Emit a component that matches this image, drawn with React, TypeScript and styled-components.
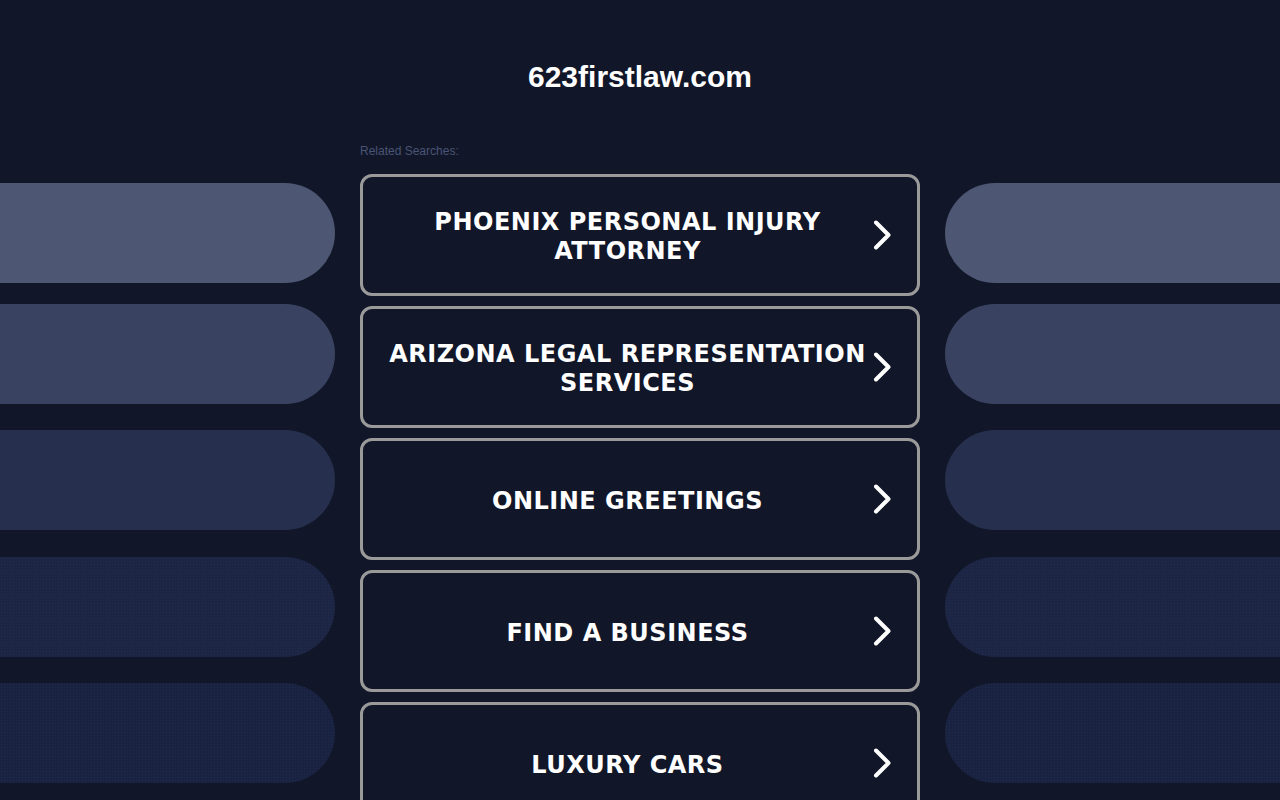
import React from "react";
import styled, { createGlobalStyle, css } from "styled-components";

const Global = createGlobalStyle`
  html, body { margin: 0; padding: 0; background: #111729; overflow: hidden; }
  body { font-family: "Liberation Sans", Arial, sans-serif; }
`;

const Page = styled.div`
  display: grid;
  grid-template-columns: 1fr 560px 1fr;
  column-gap: 25px;
  width: 1280px;
  height: 800px;
  overflow: hidden;
`;

const Side = styled.div`
  display: flex;
  flex-direction: column;
`;

const dotted = css`
  background-image: radial-gradient(rgba(60, 75, 115, 0.22) 0.6px, transparent 0.9px);
  background-size: 3px 3px;
`;

const Pill = styled.div<{ $side: "left" | "right"; $top: number; $color: string; $dots?: boolean }>`
  height: 100px;
  margin-top: ${(p) => p.$top}px;
  background-color: ${(p) => p.$color};
  ${(p) => (p.$dots ? dotted : "")}
  border-radius: ${(p) => (p.$side === "left" ? "0 50px 50px 0" : "50px 0 0 50px")};
`;

const Center = styled.main`
  display: flex;
  flex-direction: column;
`;

const Title = styled.h1`
  margin: 0;
  padding-top: 59px;
  font-family: "Liberation Sans", Arial, sans-serif;
  font-size: 30px;
  line-height: 36px;
  font-weight: 700;
  color: #ffffff;
  text-align: center;
`;

const Related = styled.div`
  margin-top: 49px;
  font-family: "Liberation Sans", Arial, sans-serif;
  font-size: 12px;
  line-height: 14px;
  color: #4a5475;
`;

const List = styled.div`
  margin-top: 16px;
  display: flex;
  flex-direction: column;
  gap: 10px;
`;

const Item = styled.a`
  box-sizing: border-box;
  height: 122px;
  flex-shrink: 0;
  display: flex;
  align-items: center;
  padding: 0 27px 0 17px;
  border: 3px solid #9a9a9a;
  border-radius: 12px;
  background: #111729;
  text-decoration: none;
  cursor: pointer;
`;

const Label = styled.span`
  flex: 1;
  padding-top: 4px;
  text-align: center;
  font-family: "DejaVu Sans", Verdana, sans-serif;
  font-weight: 700;
  font-size: 24px;
  line-height: 29px;
  letter-spacing: 0.5px;
  color: #ffffff;
  text-transform: uppercase;
`;

const ChevronBox = styled.svg`
  flex-shrink: 0;
  width: 19px;
  height: 30px;
  margin-left: -2px;
  margin-right: -2px;
`;

const Chevron = () => (
  <ChevronBox viewBox="0 0 19 30" fill="none">
    <path d="M3 2.5 L15.5 15 L3 27.5" stroke="#ffffff" strokeWidth="4" strokeLinecap="round" strokeLinejoin="round" />
  </ChevronBox>
);

const pills = [
  { top: 183, color: "#4d5672" },
  { top: 21, color: "#3a4261" },
  { top: 26, color: "#262f4d" },
  { top: 27, color: "#1d2545", dots: true },
  { top: 26, color: "#1a2241", dots: true },
];

const items = [
  "Phoenix Personal Injury Attorney",
  "Arizona Legal Representation Services",
  "Online Greetings",
  "Find a Business",
  "Luxury Cars",
];

export default function App() {
  return (
    <>
      <Global />
      <Page>
        <Side>
          {pills.map((p, i) => (
            <Pill key={i} $side="left" $top={p.top} $color={p.color} $dots={p.dots} />
          ))}
        </Side>
        <Center>
          <Title>623firstlaw.com</Title>
          <Related>Related Searches:</Related>
          <List>
            {items.map((t) => (
              <Item key={t}>
                <Label>{t}</Label>
                <Chevron />
              </Item>
            ))}
          </List>
        </Center>
        <Side>
          {pills.map((p, i) => (
            <Pill key={i} $side="right" $top={p.top} $color={p.color} $dots={p.dots} />
          ))}
        </Side>
      </Page>
    </>
  );
}
